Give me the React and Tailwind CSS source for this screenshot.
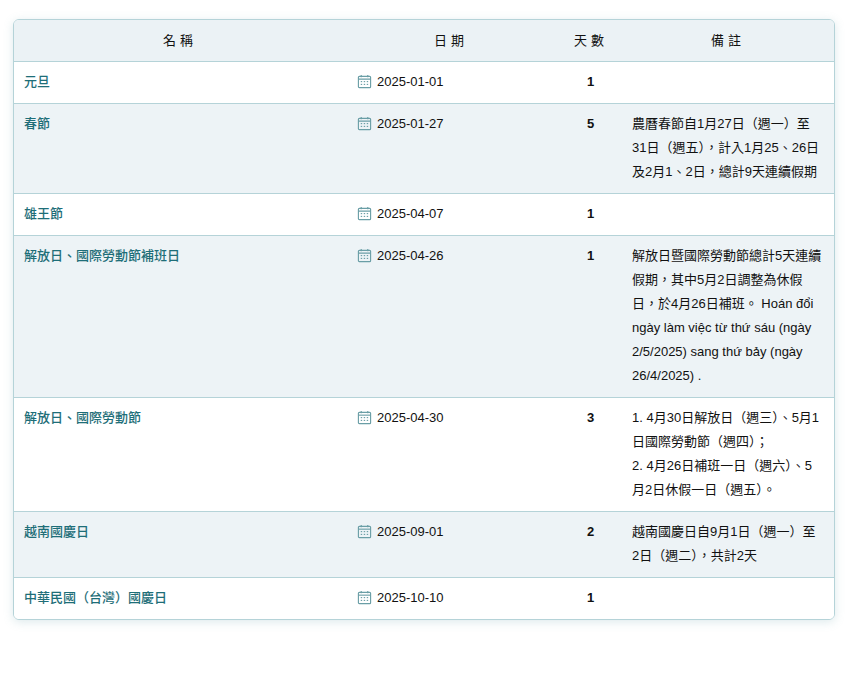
import React from "react";

const rows = [
  { name: "元旦", date: "2025-01-01", days: 1, note: "" },
  { name: "春節", date: "2025-01-27", days: 5, note: "農曆春節自1月27日（週一）至31日（週五），計入1月25、26日及2月1、2日，總計9天連續假期" },
  { name: "雄王節", date: "2025-04-07", days: 1, note: "" },
  { name: "解放日、國際勞動節補班日", date: "2025-04-26", days: 1, note: "解放日暨國際勞動節總計5天連續假期，其中5月2日調整為休假日，於4月26日補班。 Hoán đổi ngày làm việc từ thứ sáu (ngày 2/5/2025) sang thứ bảy (ngày 26/4/2025) ." },
  { name: "解放日、國際勞動節", date: "2025-04-30", days: 3, note: ["1. 4月30日解放日（週三）、5月1日國際勞動節（週四）；", "2. 4月26日補班一日（週六）、5月2日休假一日（週五）。"] },
  { name: "越南國慶日", date: "2025-09-01", days: 2, note: "越南國慶日自9月1日（週一）至2日（週二），共計2天" },
  { name: "中華民國（台灣）國慶日", date: "2025-10-10", days: 1, note: "" },
];

const CalIcon = () => (
  <svg width="15" height="15" viewBox="0 0 16 16" fill="none" stroke="#6a9ea6" strokeWidth="1.2" className="block">
    <rect x="1.5" y="2.5" width="13" height="12" rx="1" />
    <line x1="1.5" y1="5.5" x2="14.5" y2="5.5" />
    <line x1="4.5" y1="1" x2="4.5" y2="3.5" />
    <line x1="11.5" y1="1" x2="11.5" y2="3.5" />
    <g fill="#6a9ea6" stroke="none">
      <rect x="4" y="7.5" width="1.5" height="1.2" />
      <rect x="7.2" y="7.5" width="1.5" height="1.2" />
      <rect x="10.4" y="7.5" width="1.5" height="1.2" />
      <rect x="4" y="10.5" width="1.5" height="1.2" />
      <rect x="7.2" y="10.5" width="1.5" height="1.2" />
      <rect x="10.4" y="10.5" width="1.5" height="1.2" />
    </g>
  </svg>
);

export default function App() {
  return (
    <div className="bg-white min-h-[676px] pt-[19px] px-[13px]" style={{ fontFamily: '"Liberation Sans", "Noto Sans CJK TC", sans-serif' }}>
      <div className="rounded-md border border-[#b5d3d8] overflow-hidden shadow-[0_2px_10px_rgba(120,170,180,0.25)]">
        <table className="w-full table-fixed border-collapse text-[13px] text-[#111]">
          <colgroup>
            <col className="w-[332px]" />
            <col className="w-[210px]" />
            <col className="w-[66px]" />
            <col />
          </colgroup>
          <thead>
            <tr className="bg-[#ebf2f5] h-[41px]">
              <th className="font-normal tracking-[4px]">名稱</th>
              <th className="font-normal tracking-[4px]">日期</th>
              <th className="font-normal tracking-[4px] text-left pl-[18px]">天數</th>
              <th className="font-normal tracking-[4px]">備註</th>
            </tr>
          </thead>
          <tbody>
            {rows.map((r, i) => (
              <tr key={i} className={`border-t border-[#b5d3d8] align-top leading-[24px] ${i % 2 ? "bg-[#edf3f6]" : "bg-white"}`}>
                <td className="pl-[10px] pt-[8px] pb-[9px] text-[#1e6e78] font-medium">{r.name}</td>
                <td className="pl-[11px] pt-[8px] pb-[9px]">
                  <div className="flex items-center gap-[5px] h-[24px]"><CalIcon />{r.date}</div>
                </td>
                <td className="pt-[8px] pb-[9px] font-bold text-left pl-[31px]">{r.days}</td>
                <td className="pl-[10px] pr-[12px] pt-[8px] pb-[9px] [font-feature-settings:'fwid']">
                  {Array.isArray(r.note) ? r.note.map((n, j) => <div key={j}>{n}</div>) : r.note}
                </td>
              </tr>
            ))}
          </tbody>
        </table>
      </div>
    </div>
  );
}
